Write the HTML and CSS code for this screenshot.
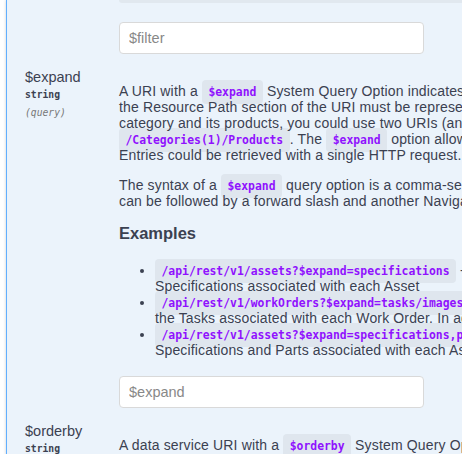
FILE: index.html
```html
<!DOCTYPE html>
<html lang="en">
<head>
    <meta charset="UTF-8">
    <meta name="viewport" content="width=device-width, initial-scale=1.0">
    <title>Parameters</title>
    <link rel="stylesheet" href="styles.css">
</head>
<body>
    <div class="opblock">
        <!-- $filter (tail of the previous parameter) -->
        <div class="param-row first">
            <div class="param-name"></div>
            <div class="param-desc">
                <div class="code-tail"></div>
                <input type="text" class="param-input" placeholder="$filter">
            </div>
        </div>

        <!-- $expand -->
        <div class="param-row">
            <div class="param-name">
                <div class="name">$expand</div>
                <div class="type">string</div>
                <div class="type in">(query)</div>
            </div>
            <div class="param-desc">
                <div class="markdown">
                    <p>A URI with a <code>$expand</code> System Query Option indicates that Entries associated with the Entry or Collection of Entries identified by<br>
                    the Resource Path section of the URI must be represented inline (i.e. eagerly loaded). For example, if you want to identify a<br>
                    category and its products, you could use two URIs (and execute two requests), one for <code>/Categories(1)</code> and one for<br>
                    <code>/Categories(1)/Products</code>. The <code>$expand</code> option allows you to identify related Entries with a single URI such that a graph of<br>
                    Entries could be retrieved with a single HTTP request.</p>
                    <p>The syntax of a <code>$expand</code> query option is a comma-separated list of Navigation Properties. Additionally each Navigation Property<br>
                    can be followed by a forward slash and another Navigation Property to enable identifying a multi-level relationship.</p>
                    <h4>Examples</h4>
                    <ul>
                        <li><code>/api/rest/v1/assets?$expand=specifications</code> - Will return all Assets along with the<br>
                        Specifications associated with each Asset</li>
                        <li><code>/api/rest/v1/workOrders?$expand=tasks/images</code> - Will return all Work Orders along with<br>
                        the Tasks associated with each Work Order. In addition, the Images of each Task will be included.</li>
                        <li><code>/api/rest/v1/assets?$expand=specifications,parts</code> - Will return all Assets along with the<br>
                        Specifications and Parts associated with each Asset</li>
                    </ul>
                </div>
                <input type="text" class="param-input" placeholder="$expand">
            </div>
        </div>

        <!-- $orderby -->
        <div class="param-row">
            <div class="param-name">
                <div class="name">$orderby</div>
                <div class="type">string</div>
                <div class="type in">(query)</div>
            </div>
            <div class="param-desc">
                <div class="markdown">
                    <p>A data service URI with a <code>$orderby</code> System Query Option specifies an expression for determining what values are used to order the collection</p>
                </div>
            </div>
        </div>
    </div>
</body>
</html>
```

FILE: styles.css
```css
html, body {
    margin: 0;
    padding: 0;
    overflow: hidden;
    background: #fff;
}

body {
    font-family: "Liberation Sans", Arial, sans-serif;
    color: #3b4151;
}

.opblock {
    margin-left: 6px;
    min-height: 100vh;
    padding-left: 18px;
    background: #ebf3fb;
    border-left: 1px solid #61affe;
    box-shadow: 0 0 3px rgba(0, 0, 0, 0.19);
}

.param-row {
    display: grid;
    grid-template-columns: 94px 1fr;
    padding-top: 14px;
}

.param-row.first {
    padding-top: 0;
}

.param-name .name {
    font-size: 14.5px;
    line-height: 18px;
}

.param-name .type {
    font-family: "DejaVu Sans Mono", monospace;
    font-size: 9.7px;
    font-weight: bold;
    line-height: 14px;
    padding: 2px 0;
}

.param-name .in {
    font-style: italic;
    font-weight: normal;
    color: #777;
}

.param-desc {
    min-width: 0;
    white-space: nowrap;
}

.code-tail {
    height: 3px;
    margin-bottom: 19px;
    background: #e1e8ef;
    border-radius: 0 0 0 4px;
}

.param-input {
    display: block;
    box-sizing: border-box;
    width: 305px;
    height: 32px;
    margin: 0;
    padding: 0 9px;
    font-family: "Liberation Sans", Arial, sans-serif;
    font-size: 14.5px;
    color: #3b4151;
    background: #fff;
    border: 1px solid #d9d9d9;
    border-radius: 4px;
    outline: none;
}

.param-input::placeholder {
    color: #888;
}

.markdown {
    padding-top: 15px;
    font-size: 14px;
    line-height: 16px;
    letter-spacing: 0.15px;
}

.markdown p {
    margin: 0 0 14px;
}

.markdown h4 {
    margin: 13px 0 19px;
    font-size: 16.5px;
    line-height: 20px;
    font-weight: bold;
    letter-spacing: 0;
}

.markdown ul {
    margin: 0 0 18px;
    padding-left: 36px;
}

.markdown code {
    font-family: "DejaVu Sans Mono", monospace;
    font-size: 11.4px;
    font-weight: bold;
    line-height: 1;
    letter-spacing: 0;
    color: #9012fe;
    background: rgba(0, 0, 0, 0.05);
    border-radius: 4px;
    padding: 5px 6.5px;
}
```
